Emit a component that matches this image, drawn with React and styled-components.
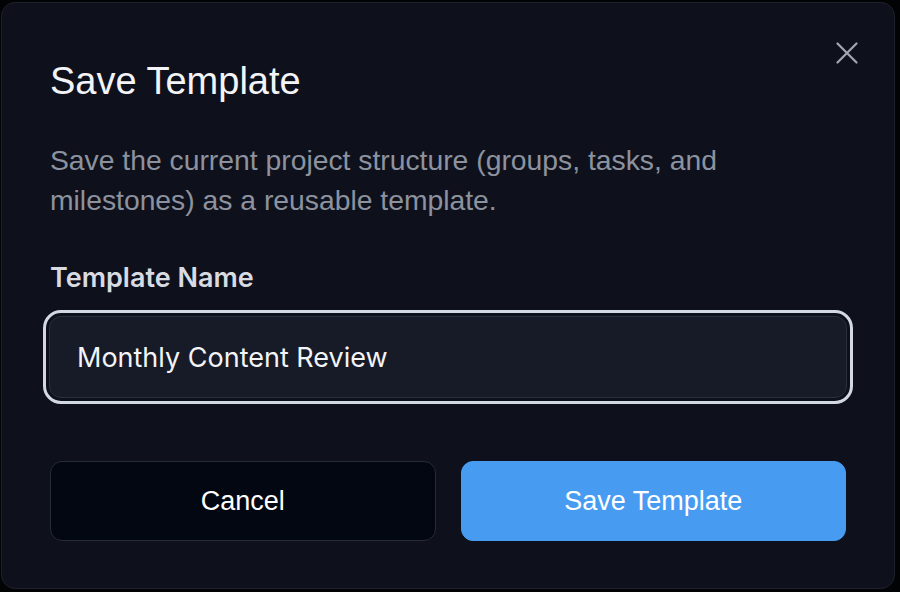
import styled, { createGlobalStyle } from "styled-components";

const GlobalStyle = createGlobalStyle`
  html, body {
    margin: 0;
    padding: 0;
    background: #020305;
    overflow: hidden;
  }
  * {
    box-sizing: border-box;
  }
`;

const Page = styled.div`
  width: 900px;
  height: 592px;
  padding: 2px 0 0 1px;
`;

const Dialog = styled.div`
  position: relative;
  width: 894px;
  display: flex;
  flex-direction: column;
  padding: 56px 48px 47px 48px;
  background: #0e111c;
  border: 1px solid #1d212c;
  border-radius: 14px;
  font-family: "Liberation Sans", Arial, sans-serif;
`;

const CloseButton = styled.button`
  position: absolute;
  top: 36px;
  right: 33px;
  width: 28px;
  height: 28px;
  display: flex;
  align-items: center;
  justify-content: center;
  padding: 0;
  border: none;
  background: transparent;
  color: #a3a7b0;
  cursor: pointer;
`;

const Title = styled.h2`
  margin: 0;
  font-size: 38px;
  line-height: 44px;
  font-weight: 400;
  color: #f3f4f7;
`;

const Description = styled.p`
  margin: 37px 0 0 0;
  font-size: 28.3px;
  line-height: 40px;
  color: #8d929f;
`;

const Label = styled.label`
  margin-top: 42px;
  font-family: Inter, "Liberation Sans", sans-serif;
  font-size: 27px;
  line-height: 32px;
  font-weight: 600;
  color: #d8dbe2;
`;

const Input = styled.input`
  margin: 22px -1px 0 -1px;
  height: 82px;
  padding: 0 27px;
  font-family: Inter, "Liberation Sans", sans-serif;
  font-size: 27px;
  color: #f2f4f7;
  background: #171a27;
  border: 1px solid #2a2f3c;
  border-radius: 12px;
  outline: 3px solid #d3d9e3;
  outline-offset: 3px;
`;

const Actions = styled.div`
  margin-top: 63px;
  display: grid;
  grid-template-columns: 1fr 1fr;
  gap: 25px;
`;

const Button = styled.button`
  height: 80px;
  border-radius: 12px;
  font-family: "Liberation Sans", Arial, sans-serif;
  font-size: 27px;
  color: #ffffff;
  cursor: pointer;
  border: 1px solid ${(p) => (p.$primary ? "#479cf2" : "#262b37")};
  background: ${(p) => (p.$primary ? "#479cf2" : "#030712")};
`;

export default function App() {
  return (
    <>
      <GlobalStyle />
      <Page>
        <Dialog>
          <CloseButton aria-label="Close">
            <svg width="22" height="22" viewBox="0 0 22 22" fill="none">
              <path
                d="M1.5 1.5L20.5 20.5M20.5 1.5L1.5 20.5"
                stroke="currentColor"
                strokeWidth="2.2"
                strokeLinecap="round"
              />
            </svg>
          </CloseButton>
          <Title>Save Template</Title>
          <Description>
            Save the current project structure (groups, tasks, and milestones)
            as a reusable template.
          </Description>
          <Label htmlFor="template-name">Template Name</Label>
          <Input id="template-name" defaultValue="Monthly Content Review" />
          <Actions>
            <Button>Cancel</Button>
            <Button $primary>Save Template</Button>
          </Actions>
        </Dialog>
      </Page>
    </>
  );
}
